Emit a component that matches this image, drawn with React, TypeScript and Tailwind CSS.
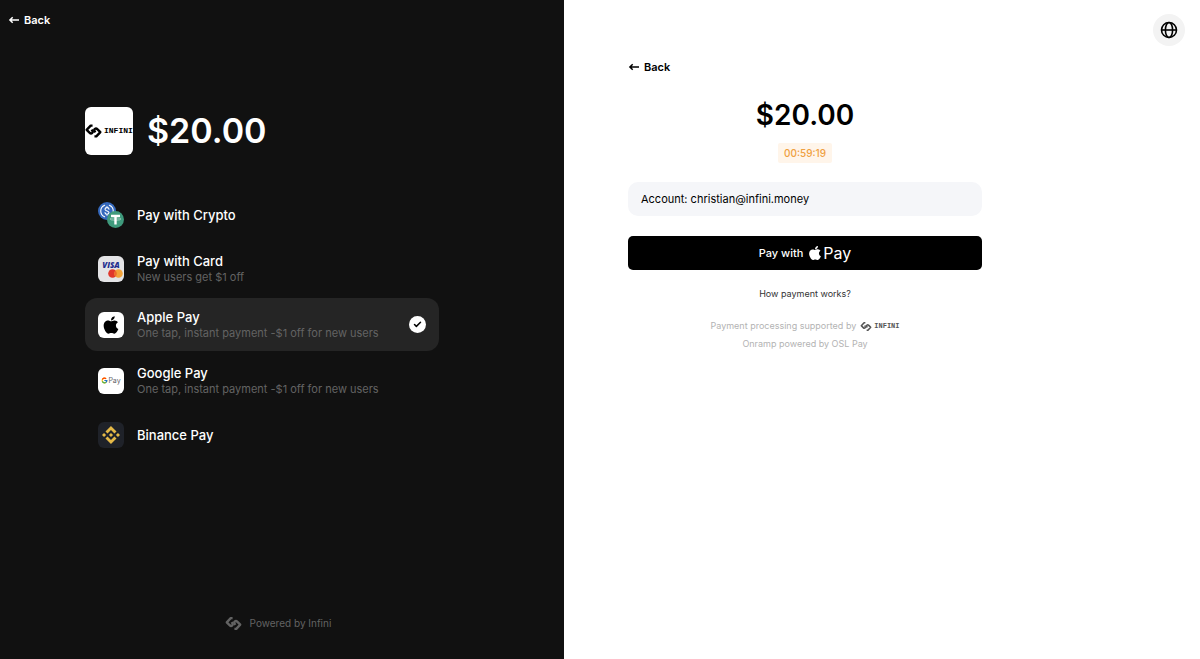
import { useId, useState } from "react";
import { FaApple } from "react-icons/fa";
import { SiBinance } from "react-icons/si";
import { FcGoogle } from "react-icons/fc";
import { LuCheck } from "react-icons/lu";

type TMethod = {
  id: string;
  title: string;
  note?: string;
  icon: React.ReactNode;
};

const InfiniMark: React.FC<{ className?: string }> = ({ className }) => (
  <svg
    viewBox="0 0 36 28"
    fill="none"
    stroke="currentColor"
    strokeWidth="5"
    strokeLinejoin="round"
    className={className}
    aria-hidden="true"
  >
    <path d="M16 2.500h-4l-8.500 9 6 6q3 3 5.500 1t.5-5l-1.500-2.500" />
    <path d="M20 25.500h4l8.500-9-6-6q-3-3-5.500-1t-.5 5l1.500 2.500" />
  </svg>
);

const ArrowLeft = () => (
  <svg viewBox="0 0 12 12" fill="none" stroke="currentColor" strokeWidth="1.500" className="size-3" aria-hidden="true">
    <path d="M11 6H2M4.700 3.200L1.900 6l2.800 2.800" />
  </svg>
);

const CryptoIcon = () => (
  <svg viewBox="0 0 26 26" className="size-[26px]" aria-hidden="true">
    <circle cx="9" cy="9" r="9" fill="#3569bd" />
    <g fill="none" stroke="#fff" strokeWidth="1.100" strokeLinecap="round">
      <path d="M6.600 3.200a6.300 6.300 0 0 0 0 11.600M11.400 3.200a6.300 6.300 0 0 1 0 11.600" />
      <path d="M11 7.300c0-1.100-.9-1.700-2-1.700s-2 .6-2 1.600c0 2.300 4 1.200 4 3.400 0 1.100-.9 1.700-2 1.700s-2-.6-2-1.700M9 4.600v1M9 12.300v1" />
    </g>
    <circle cx="17.500" cy="17.500" r="8.500" fill="#3f9a7c" />
    <path d="M13 12.800h9v2.200h-3.300v7.500h-2.400V15H13z" fill="#fff" />
    <ellipse cx="17.500" cy="17" rx="5.300" ry="1.200" fill="none" stroke="#fff" strokeWidth=".5" />
  </svg>
);

const CardIcon = () => (
  <span className="flex size-[26px] flex-col items-center justify-center rounded-md bg-[#e4e4e6]">
    <span className="font-['Open_Sans',sans-serif] text-[8px] leading-[9px] font-extrabold text-[#1f2f8f] italic">
      VISA
    </span>
    <svg viewBox="0 0 15 9" className="ml-2 h-[9px] w-[15px]" aria-hidden="true">
      <circle cx="4.500" cy="4.500" r="4.300" fill="#e0382c" />
      <circle cx="10.500" cy="4.500" r="4.300" fill="#f2a33a" />
      <path d="M7.500 1.400a4.300 4.300 0 0 1 0 6.200a4.300 4.300 0 0 1 0-6.200" fill="#ee6b2d" />
    </svg>
  </span>
);

const methods: TMethod[] = [
  { id: "crypto", title: "Pay with Crypto", icon: <CryptoIcon /> },
  { id: "card", title: "Pay with Card", note: "New users get $1 off", icon: <CardIcon /> },
  {
    id: "apple",
    title: "Apple Pay",
    note: "One tap, instant payment -$1 off for new users",
    icon: (
      <span className="flex size-[26px] items-center justify-center rounded-md bg-white text-black">
        <FaApple className="size-5" />
      </span>
    ),
  },
  {
    id: "google",
    title: "Google Pay",
    note: "One tap, instant payment -$1 off for new users",
    icon: (
      <span className="flex size-[26px] items-center justify-center rounded-md bg-white text-[7px] leading-none text-[#5f6368]">
        <FcGoogle className="size-[7px]" />
        Pay
      </span>
    ),
  },
  {
    id: "binance",
    title: "Binance Pay",
    icon: (
      <span className="flex size-[26px] items-center justify-center rounded-md bg-[#1f2229] text-[#e5b947]">
        <SiBinance className="size-[18px]" />
      </span>
    ),
  },
];

const BackBtn: React.FC<{ className?: string }> = ({ className }) => (
  <button type="button" className={`flex items-center gap-1 text-[11px] leading-4 font-semibold ${className}`}>
    <ArrowLeft />
    Back
  </button>
);

const GlobeIcon = () => (
  <svg viewBox="0 0 18 18" fill="none" stroke="#000" strokeWidth="1.600" className="size-[18px]" aria-hidden="true">
    <circle cx="9" cy="9" r="7.500" />
    <ellipse cx="9" cy="9" rx="3.600" ry="7.500" />
    <path d="M1.500 9h15" />
  </svg>
);

const App = () => {
  const [selected, setSelected] = useState("apple");
  const group = useId();

  return (
    <div className="flex min-h-screen bg-white font-[Inter,sans-serif]">
      <section className="flex w-[47%] flex-col bg-[#111] px-2 pt-3 pb-7 text-white">
        <BackBtn className="self-start" />

        <div className="mt-[79px] ml-[77px] w-full max-w-[354px]">
          <div className="flex items-center gap-[14px]">
            <div className="flex size-12 items-center gap-[2px] rounded-md bg-white text-black">
              <InfiniMark className="h-[14px] w-[17px] shrink-0" />
              <span className="font-['Liberation_Mono',monospace] text-[8px] leading-4 font-bold">INFINI</span>
            </div>
            <h1 className="text-[34px] leading-10 font-semibold">$20.00</h1>
          </div>

          <div role="radiogroup" aria-label="Payment method" className="mt-[35px] flex flex-col gap-[3px]">
            {methods.map((el) => (
              <label
                key={el.id}
                className={`flex cursor-pointer items-center gap-[13px] rounded-xl px-[13px] ${
                  el.note ? "min-h-[53px]" : "min-h-[49px]"
                } ${selected === el.id ? "bg-[#252525]" : ""}`}
              >
                <input
                  type="radio"
                  name={group}
                  checked={selected === el.id}
                  onChange={() => setSelected(el.id)}
                  className="sr-only"
                />
                {el.icon}
                <span className="flex-1">
                  <span className="block text-[13px] leading-4 font-medium">{el.title}</span>
                  {el.note && <span className="block text-[11px] leading-4 text-[#636363]">{el.note}</span>}
                </span>
                {selected === el.id && (
                  <span className="flex size-[17px] items-center justify-center rounded-full bg-white text-black">
                    <LuCheck className="size-[9px]" strokeWidth={4} />
                  </span>
                )}
              </label>
            ))}
          </div>
        </div>

        <p className="mt-auto flex items-center justify-center gap-2 pr-2 text-[10px] leading-4 text-[#636363]">
          <InfiniMark className="h-[13px] w-[17px]" />
          Powered by Infini
        </p>
      </section>

      <main className="flex flex-1 justify-between pr-[15px] text-black">
        <div className="ml-16 flex w-full max-w-[354px] flex-col items-center pt-[59px]">
          <BackBtn className="self-start" />
          <h2 className="mt-5 text-[28px] leading-10 font-semibold">$20.00</h2>
          <time className="mt-2 rounded-xs bg-[#fff5ea] px-[6px] py-[2px] text-[10px] leading-4 font-medium text-[#efa041]">
            00:59:19
          </time>
          <div className="mt-[19px] w-full rounded-[10px] bg-[#f5f6f9] px-[13px] py-[9px] text-[11px] leading-4">
            Account: christian@infini.money
          </div>
          <button
            type="button"
            className="mt-5 flex h-[34px] w-full items-center justify-center rounded-[5px] bg-black text-[11px] font-medium text-white"
          >
            Pay with
            <FaApple className="ml-1 size-4" />
            <span className="text-base leading-4 font-normal">Pay</span>
          </button>
          <a href="#how" className="mt-4 text-[9px] leading-4 text-[#333]">
            How payment works?
          </a>
          <p className="mt-4 flex items-center text-[9px] leading-4 text-[#b3b3b3]">
            Payment processing supported by
            <InfiniMark className="ml-1 h-[9px] w-3 text-[#555]" />
            <span className="ml-[2px] font-['Liberation_Mono',monospace] text-[7px] font-bold text-[#555]">INFINI</span>
          </p>
          <p className="mt-[2px] text-[9px] leading-4 text-[#b3b3b3]">Onramp powered by OSL Pay</p>
        </div>

        <button
          type="button"
          aria-label="Language"
          className="mt-[14px] flex size-8 shrink-0 items-center justify-center rounded-full bg-[#f3f3f3]"
        >
          <GlobeIcon />
        </button>
      </main>
    </div>
  );
};

export default App;
